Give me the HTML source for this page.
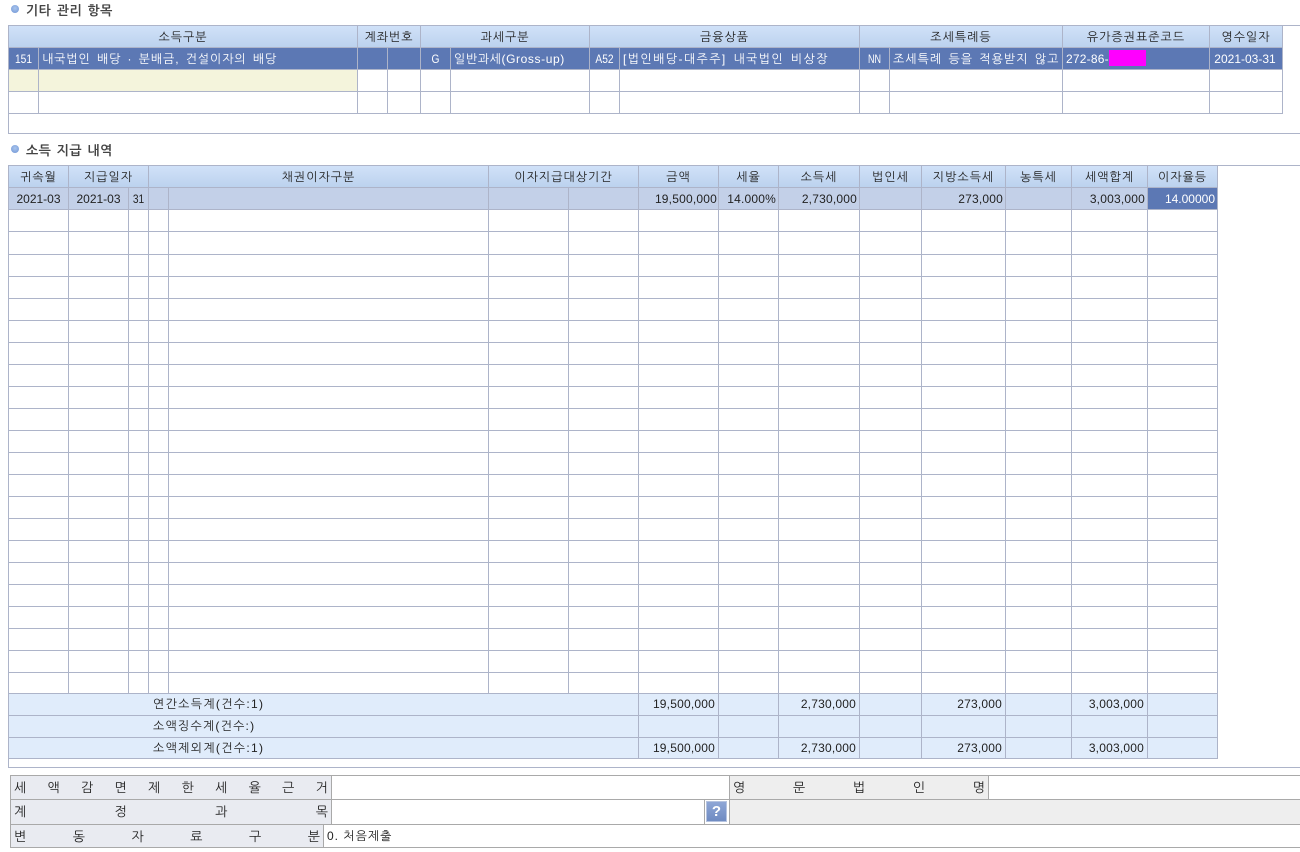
<!DOCTYPE html>
<html lang="ko"><head><meta charset="utf-8"><title>기타 관리 항목</title>
<style>
html,body{margin:0;padding:0;background:#fff;width:1300px;height:852px;overflow:hidden}
body{position:relative;font-family:"Liberation Sans","NanumGothic","Noto Sans CJK KR",sans-serif;font-size:12px;color:#222}
div{position:absolute;box-sizing:border-box}
.h{height:1px;background:#adb4c9}
.v{width:1px;background:#adb4c9}
.g{height:1px;background:#a9a9a9}
.gv{width:1px;background:#a9a9a9}
.t{white-space:nowrap;line-height:21px;height:22px;padding-top:1px;overflow:hidden;letter-spacing:1px;word-spacing:2px}
.n{letter-spacing:.2px;word-spacing:0}
.m{letter-spacing:0}
.s{letter-spacing:0;transform:scaleX(.85)}
.c{text-align:center}
.r{text-align:right}
.w{color:#fff}
.hd{background:linear-gradient(#d0e1f8,#bcd2ee)}
.b{width:8px;height:8px;border-radius:50%;background:radial-gradient(circle at 50% 40%,#a9c5ee,#6f94d4)}
.ti{font-weight:bold;font-size:13px;color:#444;white-space:nowrap;line-height:16px;letter-spacing:.4px;word-spacing:1.5px}
.l{display:flex;justify-content:space-between;padding:0 3px;line-height:24px;white-space:nowrap;color:#222;font-size:13px}
.l span{display:block}
</style></head><body>

<!-- section 1 -->
<div class="b" style="left:11px;top:5px"></div>
<div class="ti" style="left:26px;top:3px">기타 관리 항목</div>
<div class="hd" style="left:9px;top:26px;width:1273px;height:21px"></div>
<div style="left:9px;top:48px;width:1273px;height:21px;background:#5c78b4"></div>
<div style="left:9px;top:70px;width:348px;height:21px;background:#f4f4dc"></div>
<div style="left:1109px;top:50px;width:37px;height:16px;background:#ff00ff"></div>

<div class="h" style="left:8px;top:25px;width:1292px"></div>
<div class="h" style="left:8px;top:47px;width:1275px"></div>
<div class="h" style="left:8px;top:69px;width:1275px"></div>
<div class="h" style="left:8px;top:91px;width:1275px"></div>
<div class="h" style="left:8px;top:113px;width:1275px"></div>
<div class="h" style="left:8px;top:133px;width:1292px"></div>
<div class="v" style="left:8px;top:25px;height:109px"></div>
<div class="v" style="left:357px;top:25px;height:89px"></div>
<div class="v" style="left:420px;top:25px;height:89px"></div>
<div class="v" style="left:589px;top:25px;height:89px"></div>
<div class="v" style="left:859px;top:25px;height:89px"></div>
<div class="v" style="left:1062px;top:25px;height:89px"></div>
<div class="v" style="left:1209px;top:25px;height:89px"></div>
<div class="v" style="left:1282px;top:25px;height:89px"></div>
<div class="v" style="left:38px;top:48px;height:66px"></div>
<div class="v" style="left:387px;top:48px;height:66px"></div>
<div class="v" style="left:450px;top:48px;height:66px"></div>
<div class="v" style="left:619px;top:48px;height:66px"></div>
<div class="v" style="left:889px;top:48px;height:66px"></div>

<div class="t c" style="left:9px;top:26px;width:348px">소득구분</div>
<div class="t c" style="left:358px;top:26px;width:62px">계좌번호</div>
<div class="t c" style="left:421px;top:26px;width:168px">과세구분</div>
<div class="t c" style="left:590px;top:26px;width:269px">금융상품</div>
<div class="t c" style="left:860px;top:26px;width:202px">조세특례등</div>
<div class="t c" style="left:1063px;top:26px;width:146px">유가증권표준코드</div>
<div class="t c" style="left:1210px;top:26px;width:72px">영수일자</div>

<div class="t c w s" style="left:9px;top:48px;width:29px">151</div>
<div class="t w" style="left:42px;top:48px;width:314px;letter-spacing:.9px">내국법인 배당 · 분배금, 건설이자의 배당</div>
<div class="t c w s" style="left:421px;top:48px;width:29px">G</div>
<div class="t w" style="left:454px;top:48px;width:134px;letter-spacing:.6px">일반과세(Gross-up)</div>
<div class="t c w s" style="left:590px;top:48px;width:29px">A52</div>
<div class="t w" style="left:623px;top:48px;width:235px;letter-spacing:1.4px">[법인배당-대주주] 내국법인 비상장</div>
<div class="t c w s" style="left:860px;top:48px;width:29px;transform:scaleX(.75)">NN</div>
<div class="t w" style="left:893px;top:48px;width:168px">조세특례 등을 적용받지 않고</div>
<div class="t w n" style="left:1066px;top:48px;width:44px">272-86-</div>
<div class="t c w m" style="left:1209px;top:48px;width:72px">2021-03-31</div>

<!-- section 2 -->
<div class="b" style="left:11px;top:145px"></div>
<div class="ti" style="left:26px;top:143px">소득 지급 내역</div>
<div class="hd" style="left:9px;top:166px;width:1208px;height:21px"></div>
<div style="left:9px;top:188px;width:1138px;height:21px;background:#c3d0e8"></div>
<div style="left:1148px;top:188px;width:69px;height:21px;background:#5c78b4"></div>
<div style="left:9px;top:693px;width:1208px;height:65px;background:#e0ecfb"></div>

<div class="h" style="left:8px;top:165px;width:1292px"></div>
<div class="h" style="left:8px;top:187px;width:1210px"></div>
<div class="h" style="left:8px;top:209px;width:1210px"></div>
<div class="h" style="left:8px;top:231px;width:1210px"></div>
<div class="h" style="left:8px;top:254px;width:1210px"></div>
<div class="h" style="left:8px;top:276px;width:1210px"></div>
<div class="h" style="left:8px;top:298px;width:1210px"></div>
<div class="h" style="left:8px;top:320px;width:1210px"></div>
<div class="h" style="left:8px;top:342px;width:1210px"></div>
<div class="h" style="left:8px;top:364px;width:1210px"></div>
<div class="h" style="left:8px;top:386px;width:1210px"></div>
<div class="h" style="left:8px;top:408px;width:1210px"></div>
<div class="h" style="left:8px;top:430px;width:1210px"></div>
<div class="h" style="left:8px;top:452px;width:1210px"></div>
<div class="h" style="left:8px;top:474px;width:1210px"></div>
<div class="h" style="left:8px;top:496px;width:1210px"></div>
<div class="h" style="left:8px;top:518px;width:1210px"></div>
<div class="h" style="left:8px;top:540px;width:1210px"></div>
<div class="h" style="left:8px;top:562px;width:1210px"></div>
<div class="h" style="left:8px;top:584px;width:1210px"></div>
<div class="h" style="left:8px;top:606px;width:1210px"></div>
<div class="h" style="left:8px;top:628px;width:1210px"></div>
<div class="h" style="left:8px;top:650px;width:1210px"></div>
<div class="h" style="left:8px;top:672px;width:1210px"></div>
<div class="h" style="left:8px;top:693px;width:1210px"></div>
<div class="h" style="left:8px;top:715px;width:1210px"></div>
<div class="h" style="left:8px;top:737px;width:1210px"></div>
<div class="h" style="left:8px;top:758px;width:1210px"></div>
<div class="h" style="left:8px;top:767px;width:1292px"></div>

<div class="v" style="left:8px;top:165px;height:603px"></div>
<div class="v" style="left:68px;top:165px;height:528px"></div>
<div class="v" style="left:128px;top:188px;height:505px"></div>
<div class="v" style="left:148px;top:165px;height:528px"></div>
<div class="v" style="left:168px;top:188px;height:505px"></div>
<div class="v" style="left:488px;top:165px;height:528px"></div>
<div class="v" style="left:568px;top:188px;height:505px"></div>
<div class="v" style="left:638px;top:165px;height:594px"></div>
<div class="v" style="left:718px;top:165px;height:594px"></div>
<div class="v" style="left:778px;top:165px;height:594px"></div>
<div class="v" style="left:859px;top:165px;height:594px"></div>
<div class="v" style="left:921px;top:165px;height:594px"></div>
<div class="v" style="left:1005px;top:165px;height:594px"></div>
<div class="v" style="left:1071px;top:165px;height:594px"></div>
<div class="v" style="left:1147px;top:165px;height:594px"></div>
<div class="v" style="left:1217px;top:165px;height:594px"></div>

<div class="t c" style="left:9px;top:166px;width:59px">귀속월</div>
<div class="t c" style="left:69px;top:166px;width:79px">지급일자</div>
<div class="t c" style="left:149px;top:166px;width:339px">채권이자구분</div>
<div class="t c" style="left:489px;top:166px;width:149px">이자지급대상기간</div>
<div class="t c" style="left:639px;top:166px;width:79px">금액</div>
<div class="t c" style="left:719px;top:166px;width:59px">세율</div>
<div class="t c" style="left:779px;top:166px;width:80px">소득세</div>
<div class="t c" style="left:860px;top:166px;width:61px">법인세</div>
<div class="t c" style="left:922px;top:166px;width:83px">지방소득세</div>
<div class="t c" style="left:1006px;top:166px;width:65px">농특세</div>
<div class="t c" style="left:1072px;top:166px;width:75px">세액합계</div>
<div class="t c" style="left:1148px;top:166px;width:69px">이자율등</div>

<div class="t c m" style="left:9px;top:188px;width:59px">2021-03</div>
<div class="t c m" style="left:69px;top:188px;width:59px">2021-03</div>
<div class="t c s" style="left:129px;top:188px;width:19px">31</div>
<div class="t r n" style="left:639px;top:188px;width:78px">19,500,000</div>
<div class="t r n" style="left:719px;top:188px;width:57px">14.000%</div>
<div class="t r n" style="left:779px;top:188px;width:78px">2,730,000</div>
<div class="t r n" style="left:922px;top:188px;width:81px">273,000</div>
<div class="t r n" style="left:1072px;top:188px;width:73px">3,003,000</div>
<div class="t r w m" style="left:1148px;top:188px;width:67px">14.00000</div>

<div class="t" style="left:153px;top:693px;width:250px;letter-spacing:1.3px">연간소득계(건수:1)</div>
<div class="t r n" style="left:639px;top:693px;width:76px">19,500,000</div>
<div class="t r n" style="left:779px;top:693px;width:77px">2,730,000</div>
<div class="t r n" style="left:922px;top:693px;width:80px">273,000</div>
<div class="t r n" style="left:1072px;top:693px;width:72px">3,003,000</div>
<div class="t" style="left:153px;top:715px;width:250px;letter-spacing:1.2px">소액징수계(건수:)</div>
<div class="t" style="left:153px;top:737px;width:250px;letter-spacing:1.3px">소액제외계(건수:1)</div>
<div class="t r n" style="left:639px;top:737px;width:76px">19,500,000</div>
<div class="t r n" style="left:779px;top:737px;width:77px">2,730,000</div>
<div class="t r n" style="left:922px;top:737px;width:80px">273,000</div>
<div class="t r n" style="left:1072px;top:737px;width:72px">3,003,000</div>

<!-- form -->
<div style="left:11px;top:776px;width:320px;height:23px;background:#e9ebf1"></div>
<div style="left:11px;top:800px;width:320px;height:24px;background:#e9ebf1"></div>
<div style="left:11px;top:825px;width:312px;height:22px;background:#e9ebf1"></div>
<div style="left:730px;top:776px;width:258px;height:23px;background:#eeeeee"></div>
<div style="left:730px;top:800px;width:570px;height:24px;background:#eeeeee"></div>

<div class="g" style="left:10px;top:775px;width:1290px"></div>
<div class="g" style="left:10px;top:799px;width:1290px"></div>
<div class="g" style="left:10px;top:824px;width:1290px"></div>
<div class="g" style="left:10px;top:847px;width:1290px"></div>
<div class="gv" style="left:10px;top:775px;height:73px"></div>
<div class="gv" style="left:331px;top:775px;height:50px"></div>
<div class="gv" style="left:323px;top:824px;height:24px"></div>
<div class="gv" style="left:704px;top:799px;height:26px"></div>
<div class="gv" style="left:729px;top:775px;height:50px"></div>
<div class="gv" style="left:988px;top:775px;height:25px"></div>

<div class="l" style="left:11px;top:776px;width:320px;height:23px"><span>세</span><span>액</span><span>감</span><span>면</span><span>제</span><span>한</span><span>세</span><span>율</span><span>근</span><span>거</span></div>
<div class="l" style="left:11px;top:800px;width:320px;height:24px"><span>계</span><span>정</span><span>과</span><span>목</span></div>
<div class="l" style="left:11px;top:825px;width:312px;height:22px"><span>변</span><span>동</span><span>자</span><span>료</span><span>구</span><span>분</span></div>
<div class="l" style="left:730px;top:776px;width:258px;height:23px"><span>영</span><span>문</span><span>법</span><span>인</span><span>명</span></div>
<div class="t" style="left:327px;top:825px;width:200px;word-spacing:0">0. 처음제출</div>

<div style="left:706px;top:801px;width:21px;height:21px;background:linear-gradient(#8ea6d6,#6f8bc2);border:1px solid #b5c3e0;color:#fff;font-weight:bold;font-size:15px;line-height:19px;text-align:center">?</div>
</body></html>
